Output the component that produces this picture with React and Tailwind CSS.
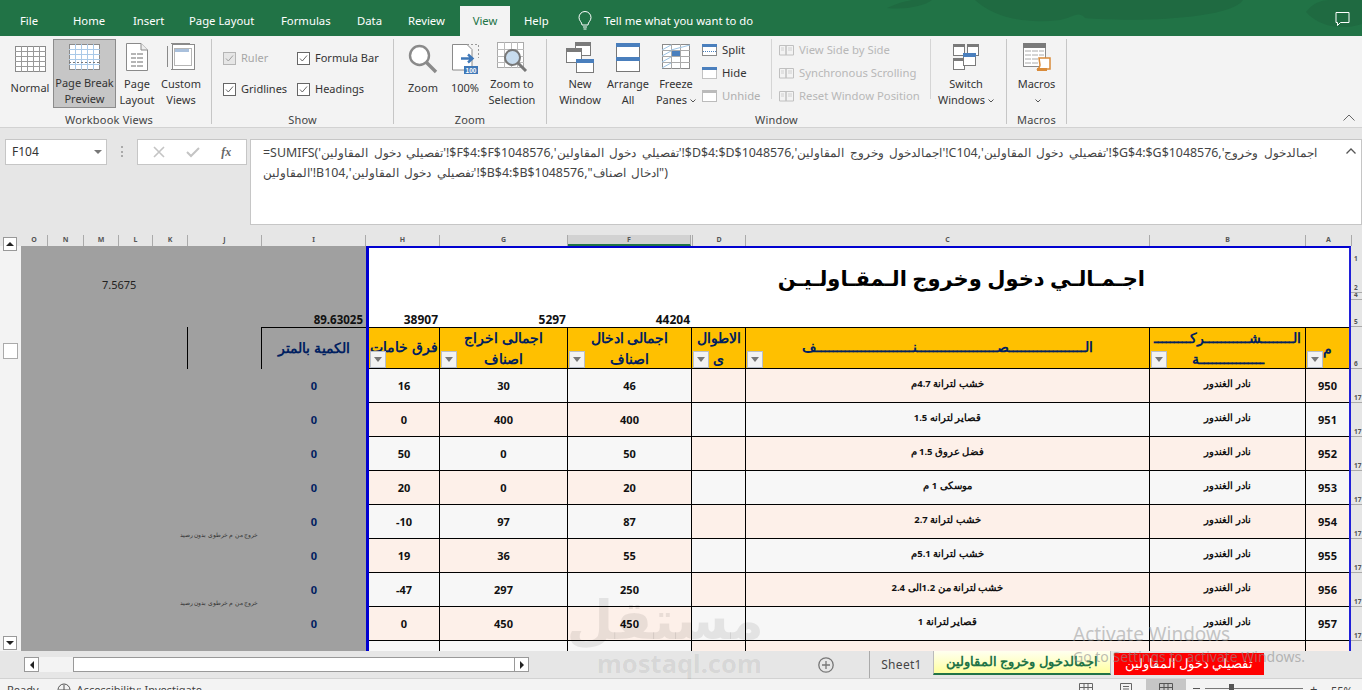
import React from "react";

const AR = '"Liberation Sans","Noto Sans",Arial,sans-serif';
const k = (n) => "ـ".repeat(n);

function Check({ label, disabled }) {
  return (
    <div className={`h-[16px] flex items-center gap-[5px] text-[11px] ${disabled ? "text-[#a6a6a6]" : "text-[#333]"}`}>
      <span className={`w-[13px] h-[13px] border flex items-center justify-center ${disabled ? "border-[#b5b5b5] bg-[#e6e6e6]" : "border-[#666] bg-white"}`}>
        <svg width="9" height="9" viewBox="0 0 9 9"><path d="M1 4.5l2.3 2.5L8 1.5" fill="none" stroke={disabled ? "#a0a0a0" : "#666"} strokeWidth="1" /></svg>
      </span>
      {label}
    </div>
  );
}

function Big({ w, icon, lines, active }) {
  return (
    <div className={`flex flex-col items-center h-[69px] shrink-0 ${active ? "pt-[1px] bg-[#c6c6c6] border border-[#8c8c8c]" : "pt-[2px]"}`} style={{ width: w }}>
      <div className="h-[36px] flex items-center justify-center">{icon}</div>
      <div className="mt-[3px] text-[11px] leading-[16px] text-[#333] text-center whitespace-nowrap">
        {lines.map((l, i) => <div key={i}>{l}</div>)}
      </div>
    </div>
  );
}

const GridIcon = ({ blue }) => (
  <svg width="31" height="26" viewBox="0 0 31 26">
    <rect x=".5" y=".5" width="30" height="25" fill="#fff" stroke="#8a8a8a" />
    {[5, 10, 15, 20].map(y => <path key={y} d={`M0 ${y + .5}H31`} stroke={blue ? "#a9c9e8" : "#9a9a9a"} />)}
    {[6, 12, 18, 24].map(x => <path key={x} d={`M${x + .5} 0V26`} stroke={blue ? "#a9c9e8" : "#9a9a9a"} />)}
    {blue && <path d="M0 18.5H31" stroke="#777" strokeDasharray="2 2" />}
  </svg>
);
const PageIcon = () => (
  <svg width="22" height="28" viewBox="0 0 22 28">
    <path d="M.5.5H15L21.5 7V27.5H.5Z" fill="#fff" stroke="#8a8a8a" />
    <path d="M15 .5V7H21.5" fill="#eee" stroke="#8a8a8a" />
    {[11, 15, 19, 23].map(y => <path key={y} d={`M5 ${y}H17`} stroke="#b5b5b5" strokeWidth="2" />)}
    <path d="M10.5 10V24" stroke="#fff" />
  </svg>
);
const CustomIcon = () => (
  <svg width="28" height="28" viewBox="0 0 28 28">
    <path d="M.5 3V24M4 .5H23M4 26.5H23" stroke="#8a8a8a" fill="none" />
    <rect x="5.5" y="1.5" width="22" height="25" fill="#fff" stroke="#8a8a8a" />
    <rect x="8" y="6" width="14" height="3" fill="#a9c0dc" />
    <rect x="7.5" y="5.5" width="17" height="17" fill="none" stroke="#b5b5b5" />
  </svg>
);
const ZoomIcon = () => (
  <svg width="30" height="30" viewBox="0 0 30 30">
    <circle cx="11.5" cy="11.5" r="9.5" fill="#fff" stroke="#8a8a8a" strokeWidth="2.4" />
    <path d="M18.5 18.5L28 28" stroke="#8a8a8a" strokeWidth="3.4" />
  </svg>
);
const Zoom100 = () => (
  <svg width="27" height="30" viewBox="0 0 27 30">
    <path d="M.5.5H15L20 5.5V26H.5Z" fill="#fff" stroke="#8a8a8a" />
    <path d="M15 .5H26.5V14" stroke="#999" strokeDasharray="2 2" fill="none" />
    <path d="M9 14.5H20M16 10.5L20.5 14.5L16 18.5" stroke="#3f78b8" strokeWidth="2.4" fill="none" />
    <rect x="12" y="22" width="14" height="8" fill="#3f78b8" />
    <text x="19" y="28.5" fontSize="6.5" fill="#fff" fontWeight="700" textAnchor="middle" fontFamily={AR}>100</text>
  </svg>
);
const ZoomSel = () => (
  <svg width="31" height="30" viewBox="0 0 31 30">
    <rect x=".5" y=".5" width="26" height="25" fill="#fff" stroke="#aaa" />
    {[7, 14, 20].map(y => <path key={y} d={`M0 ${y + .5}H27`} stroke="#bbb" />)}
    {[7, 14, 20].map(x => <path key={x} d={`M${x + .5} 0V26`} stroke="#bbb" />)}
    <circle cx="15.5" cy="15.5" r="7.5" fill="#c8dcee" stroke="#777" strokeWidth="2" />
    <path d="M21 21L29 29" stroke="#777" strokeWidth="3" />
  </svg>
);
const NewWin = () => (
  <svg width="28" height="31" viewBox="0 0 28 31">
    <rect x="9.5" y=".5" width="15" height="13" fill="#fff" stroke="#7a7a7a" /><rect x="9" y="0" width="16" height="4" fill="#7a7a7a" />
    <rect x=".5" y="6.5" width="15" height="14" fill="#fff" stroke="#7a7a7a" /><rect x="0" y="6" width="16" height="4" fill="#7a7a7a" />
    <rect x="10.5" y="17.5" width="17" height="13" fill="#fff" stroke="#7a7a7a" /><rect x="10" y="17" width="18" height="4" fill="#4a7fbd" />
  </svg>
);
const Arrange = () => (
  <svg width="24" height="29" viewBox="0 0 24 29">
    <rect x=".5" y=".5" width="23" height="28" fill="#fff" stroke="#777" />
    <rect x="0" y="0" width="24" height="4" fill="#4a7fbd" /><rect x="0" y="14" width="24" height="4" fill="#4a7fbd" />
  </svg>
);
const Freeze = () => (
  <svg width="28" height="26" viewBox="0 0 28 26">
    <rect x=".5" y=".5" width="27" height="24" fill="#fff" stroke="#8a8a8a" />
    {[6, 12, 18].map(y => <path key={y} d={`M0 ${y + .5}H28`} stroke="#aaa" />)}
    {[9, 18].map(x => <path key={x} d={`M${x + .5} 0V25`} stroke="#aaa" />)}
    <path d="M0 6L9 1M0 12L9 7M0 18L9 13M0 24L9 19M9 6L28 1" stroke="#9cc2e2" />
    <rect x="10" y="7" width="8" height="5" fill="#4a7fbd" />
  </svg>
);
const SmallWin = ({ kind }) => (
  <svg width="15" height="12" viewBox="0 0 15 12">
    <rect x=".5" y=".5" width="14" height="11" fill="#fff" stroke={kind === "u" ? "#bbb" : "#8a8a8a"} strokeDasharray={kind === "h" ? "1 1" : undefined} />
    <rect x="0" y="0" width="15" height="3" fill={kind === "u" ? "#bbb" : "#4a7fbd"} />
    {kind === "s" && <path d="M1 7.5H14" stroke="#4a7fbd" strokeDasharray="1 1" />}
  </svg>
);
const DisIcon = () => (
  <svg width="15" height="12" viewBox="0 0 15 12"><path d="M.5 1.5H7V11H.5ZM7 1.5H14.5V11H7Z" fill="none" stroke="#c0c0c0" /><path d="M2 4H5M2 6H5M9 4H13M9 6H13" stroke="#d0d0d0" /></svg>
);
const Switch = () => (
  <svg width="26" height="26" viewBox="0 0 26 26">
    <rect x=".5" y=".5" width="11" height="11" fill="#fff" stroke="#7a7a7a" /><rect x="0" y="0" width="12" height="3" fill="#7a7a7a" />
    <rect x="14.5" y=".5" width="11" height="11" fill="#fff" stroke="#7a7a7a" /><rect x="14" y="0" width="12" height="3" fill="#7a7a7a" />
    <rect x=".5" y="14.5" width="11" height="11" fill="#fff" stroke="#7a7a7a" /><rect x="0" y="14" width="12" height="3" fill="#7a7a7a" />
    <rect x="10.5" y="9.5" width="12" height="12" fill="#fff" stroke="#7a7a7a" /><rect x="10" y="9" width="13" height="4" fill="#4a7fbd" />
  </svg>
);
const Macro = () => (
  <svg width="28" height="29" viewBox="0 0 28 29">
    <rect x=".5" y=".5" width="22" height="23" fill="#fff" stroke="#8a8a8a" /><rect x="0" y="0" width="23" height="5" fill="#7a7a7a" />
    {[8, 12, 16, 20].map(y => <path key={y} d={`M2 ${y}H21`} stroke="#aaa" strokeDasharray="6 1" />)}
    <path d="M16 15H27V26H15C16 25 17 24 17 22Z" fill="#fff" stroke="#d98b3a" strokeWidth="1.5" />
    <path d="M14 25H24V28H14Z" fill="#d98b3a" />
  </svg>
);

function Group({ w, title, children }) {
  return (
    <div className="flex flex-col shrink-0 border-r border-[#c6c6c6] h-[85px] mt-[3px]" style={{ width: w }}>
      <div className="h-[69px] flex shrink-0">{children}</div>
      <div className="text-[11px] leading-[14px] text-[#444] text-center mt-[5px] tracking-[0.2px] shrink-0">{title}</div>
    </div>
  );
}

const Chev = () => (
  <svg className="inline ml-[3px]" width="6" height="4" viewBox="0 0 6 4"><path d="M.5.5L3 3L5.5.5" fill="none" stroke="#555" /></svg>
);

const FILTER = () => (
  <span className="absolute left-[1px] bottom-0 w-[16px] h-[17px] bg-[#f2f2f2] border border-[#b9bfc9] flex items-center justify-center">
    <svg width="8" height="5" viewBox="0 0 8 5"><path d="M0 0H8L4 5Z" fill="#777" /></svg>
  </span>
);

const rows = [
  ["950", "نادر الغندور", "خشب لترانة 4.7م", "46", "30", "16", "0", ""],
  ["951", "نادر الغندور", "قصاير لترانه 1.5", "400", "400", "0", "0", ""],
  ["952", "نادر الغندور", "فضل عروق 1.5 م", "50", "0", "50", "0", ""],
  ["953", "نادر الغندور", "موسكى 1 م", "20", "0", "20", "0", ""],
  ["954", "نادر الغندور", "خشب لترانة 2.7", "87", "97", "-10", "0", "خروج من م خرطوي بدون رصيد"],
  ["955", "نادر الغندور", "خشب لترانة 5.1م", "55", "36", "19", "0", ""],
  ["956", "نادر الغندور", "خشب لترانة من 1.2الى 2.4", "250", "297", "-47", "0", "خروج من م خرطوي بدون رصيد"],
  ["957", "نادر الغندور", "قصاير لترانة 1", "450", "450", "0", "0", ""],
];

const colHeads = [["O", 27], ["N", 36], ["M", 35], ["L", 34], ["K", 35], ["J", 74], ["I", 104], ["H", 74], ["G", 128], ["F", 123], ["", 2], ["D", 53], ["C", 404], ["B", 156], ["A", 46]];

const PINK = "bg-[#fdf0e9]";
const GRAY = "bg-[#f7f7f7]";
const CW = ["w-[71px]", "w-[128px]", "w-[124px]", "w-[54px]", "w-[404px]", "w-[156px]", "w-[43px]"];
const CELL = "h-full flex items-center justify-center border-r border-black font-bold text-[#111] shrink-0";

function Row({ r, idx }) {
  const a = idx % 2 === 0 ? PINK : GRAY;
  const b = idx % 2 === 0 ? GRAY : PINK;
  return (
    <div className="h-[34px] flex border-b border-black shrink-0" dir="ltr">
      <div className={`${CELL} ${CW[0]} ${b} text-[11px] pt-[1px]`}>{r[5]}</div>
      <div className={`${CELL} ${CW[1]} ${b} text-[11px] pt-[1px]`}>{r[4]}</div>
      <div className={`${CELL} ${CW[2]} ${b} text-[11px] pt-[1px]`}>{r[3]}</div>
      <div className={`${CELL} ${CW[3]} ${a}`} />
      <div className={`${CELL} ${CW[4]} ${a} text-[9.5px] pb-[2px]`} dir="rtl">{r[2]}</div>
      <div className={`${CELL} ${CW[5]} ${a} text-[9.5px] pb-[2px]`} dir="rtl">{r[1]}</div>
      <div className={`${CELL} ${CW[6]} ${a} border-r-0 text-[11px] pt-[1px]`}>{r[0]}</div>
    </div>
  );
}

function HeadCell({ w, children, noBorder }) {
  return (
    <div className={`${w} relative h-full bg-[#ffc000] shrink-0 flex items-center justify-center text-center text-[14px] leading-[21px] font-bold text-[#002060] overflow-hidden ${noBorder ? "" : "border-r border-black"}`} dir="rtl">
      {children}
      <FILTER />
    </div>
  );
}

const RH = "shrink-0 border-b border-[#aaa] flex items-end pl-[3px] leading-[9px]";

export default function App() {
  return (
    <div className="w-[1362px] h-[690px] overflow-hidden bg-[#e6e6e6] flex flex-col relative" style={{ fontFamily: '"Noto Sans","Open Sans",Arial,sans-serif' }}>
      {/* Title / tab strip */}
      <div className="h-[36px] bg-[#217346] flex items-end relative shrink-0 overflow-hidden text-[11.3px] text-white">
        <svg className="absolute left-[760px] top-0" width="602" height="36" viewBox="0 0 602 36">
          <path d="M127 8C140 2 150 0 155 0H172C165 6 145 10 127 8ZM215 0C235 18 265 24 300 20C312 18 318 10 325 18C370 22 470 20 483 0ZM546 12C552 4 560 0 570 0H602V24C585 30 560 28 546 12Z" fill="#1f6a41" />
        </svg>
        <div className="flex items-center h-[30px] relative w-full">
          <span className="ml-[20px] w-[53px]">File</span>
          <span className="w-[60px]">Home</span>
          <span className="w-[56px]">Insert</span>
          <span className="w-[92px]">Page Layout</span>
          <span className="w-[76px]">Formulas</span>
          <span className="w-[51px]">Data</span>
          <span className="w-[52px]">Review</span>
          <span className="w-[50px] h-[30px] bg-[#f3f3f3] text-[#217346] flex items-center justify-center">View</span>
          <span className="ml-[14px] w-[40px]">Help</span>
          <svg className="ml-[13px]" width="16" height="20" viewBox="0 0 16 20"><path d="M5 14C5 11 2 10 2 6.500A6 6 0 0 1 14 6.500C14 10 11 11 11 14ZM6 16H10M6.500 18H9.500" fill="none" stroke="#fff" /></svg>
          <span className="ml-[11px]">Tell me what you want to do</span>
          <svg className="absolute left-[1335px] top-[6px]" width="15" height="15" viewBox="0 0 15 15"><path d="M1 .5H14V10.500H5.500L2.500 13.500V10.500H1Z" fill="none" stroke="#fff" /></svg>
        </div>
      </div>

      {/* Ribbon */}
      <div className="h-[92px] bg-[#f3f3f3] border-b border-[#d2d2d2] flex pl-[7px] shrink-0 relative">
        <Group w={205} title="Workbook Views">
          <Big w={46} icon={<GridIcon />} lines={["Normal"]} />
          <Big w={63} icon={<GridIcon blue />} lines={["Page Break", "Preview"]} active />
          <Big w={42} icon={<PageIcon />} lines={["Page", "Layout"]} />
          <Big w={46} icon={<CustomIcon />} lines={["Custom", "Views"]} />
        </Group>
        <Group w={182} title="Show">
          <div className="grid grid-cols-[74px_auto] gap-y-[15px] pl-[11px] pt-[11px] content-start">
            <Check label="Ruler" disabled />
            <Check label="Formula Bar" />
            <Check label="Gridlines" />
            <Check label="Headings" />
          </div>
        </Group>
        <Group w={153} title="Zoom">
          <Big w={58} icon={<ZoomIcon />} lines={["Zoom"]} />
          <Big w={26} icon={<Zoom100 />} lines={["100%"]} />
          <Big w={68} icon={<ZoomSel />} lines={["Zoom to", "Selection"]} />
        </Group>
        <Group w={460} title="Window">
          <div className="w-[9px] shrink-0" />
          <Big w={48} icon={<NewWin />} lines={["New", "Window"]} />
          <Big w={48} icon={<Arrange />} lines={["Arrange", "All"]} />
          <Big w={48} icon={<Freeze />} lines={["Freeze", <span key="a">Panes<Chev /></span>]} />
          <div className="w-[71px] shrink-0 flex flex-col gap-[7px] text-[11.3px] text-[#333] pt-[3px] pl-[2px]">
            <div className="flex items-center gap-[5px] h-[16px]"><SmallWin kind="s" />Split</div>
            <div className="flex items-center gap-[5px] h-[16px]"><SmallWin kind="h" />Hide</div>
            <div className="flex items-center gap-[5px] h-[16px] text-[#b0b0b0]"><SmallWin kind="u" />Unhide</div>
          </div>
          <div className="w-[160px] shrink-0 flex flex-col gap-[7px] text-[11.3px] text-[#b8b8b8] pt-[3px] pl-[7px] h-[60px] border-x border-[#d5d5d5] whitespace-nowrap">
            <div className="flex items-center gap-[5px] h-[16px]"><DisIcon />View Side by Side</div>
            <div className="flex items-center gap-[5px] h-[16px]"><DisIcon />Synchronous Scrolling</div>
            <div className="flex items-center gap-[5px] h-[16px]"><DisIcon />Reset Window Position</div>
          </div>
          <Big w={70} icon={<Switch />} lines={["Switch", <span key="a">Windows<Chev /></span>]} />
        </Group>
        <Group w={60} title="Macros">
          <Big w={59} icon={<Macro />} lines={["Macros", <Chev key="c" />]} />
        </Group>
        <svg className="absolute right-[7px] bottom-[6px]" width="12" height="7" viewBox="0 0 12 7"><path d="M.5 6.500L6 1L11.500 6.500" fill="none" stroke="#666" /></svg>
      </div>

      {/* Formula bar */}
      <div className="h-[107px] flex pt-[11px] shrink-0 bg-[#e6e6e6]">
        <div className="ml-[5px] w-[102px] h-[26px] bg-white border border-[#c6c6c6] flex items-center justify-between pl-[6px] pr-[4px] text-[12px] text-[#333]">
          F104
          <svg width="8" height="4" viewBox="0 0 8 4"><path d="M0 0H8L4 4Z" fill="#777" /></svg>
        </div>
        <div className="w-[30px] flex justify-center pt-[7px]"><span className="w-[2px] h-[11px] border-l-2 border-dotted border-[#aaa]" /></div>
        <div className="w-[110px] h-[26px] bg-white border border-[#c6c6c6] flex items-center justify-around px-[4px]">
          <svg width="12" height="12" viewBox="0 0 12 12"><path d="M1 1L11 11M11 1L1 11" stroke="#c4c4c4" strokeWidth="1.600" /></svg>
          <svg width="14" height="12" viewBox="0 0 14 12"><path d="M1 6L5 10L13 2" fill="none" stroke="#c4c4c4" strokeWidth="2" /></svg>
          <span className="text-[12px] italic font-bold text-[#666]" style={{ fontFamily: '"Liberation Serif",serif' }}>fx</span>
        </div>
        <div className="ml-[3px] w-[1112px] h-[86px] bg-white border border-[#c6c6c6] pl-[12px] pt-[3px] text-[12.4px] [word-spacing:2.3px] leading-[20px] text-[#444] relative" dir="ltr">
          <div className="whitespace-nowrap" dir="ltr">
            {"=SUMIFS('تفصيلي دخول المقاولين'!$F$4:$F$1048576,'تفصيلي دخول المقاولين'!$D$4:$D$1048576,'اجمالدخول وخروج المقاولين'!C104,'تفصيلي دخول المقاولين'!$G$4:$G$1048576,'اجمالدخول وخروج"}
          </div>
          <div className="whitespace-nowrap" dir="ltr">
            {"المقاولين'!B104,'تفصيلي دخول المقاولين'!$B$4:$B$1048576,\"ادخال اصناف\")"}
          </div>
          <svg className="absolute right-[5px] top-[8px]" width="10" height="6" viewBox="0 0 10 6"><path d="M.5 5.500L5 1L9.500 5.500" fill="none" stroke="#555" strokeWidth="1.300" /></svg>
        </div>
      </div>

      {/* Sheet area */}
      <div className="h-[416px] flex shrink-0 relative overflow-hidden">
        <div className="w-[21px] shrink-0 flex flex-col justify-between pt-[2px] pb-[1px] bg-[#f3f3f3] relative">
          <div className="h-[11px] bg-[#e6e6e6] absolute top-0 left-0 right-0" />
          <div className="ml-[3px] w-[14px] h-[14px] bg-white border border-[#999] flex items-center justify-center relative">
            <svg width="8" height="4" viewBox="0 0 8 4"><path d="M0 4H8L4 0Z" fill="#222" /></svg>
          </div>
          <div className="absolute left-[3px] top-[108px] w-[15px] h-[16px] bg-white border border-[#aaa]" />
          <div className="ml-[3px] w-[14px] h-[14px] bg-white border border-[#999] flex items-center justify-center">
            <svg width="8" height="4" viewBox="0 0 8 4"><path d="M0 0H8L4 4Z" fill="#222" /></svg>
          </div>
        </div>
        <div className="flex-1 flex flex-col min-w-0">
          {/* column headers */}
          <div className="h-[11px] flex bg-[#e6e6e6] shrink-0 text-[7px] leading-[10px] text-[#555] font-bold">
            {colHeads.map(([n, w], i) => (
              <div key={i} className={`text-center shrink-0 border-r border-[#aaa] ${n === "F" ? "bg-[#d2d2d2] border-b-2 border-b-[#217346]" : ""}`} style={{ width: w }}>{n}</div>
            ))}
          </div>
          <div className="flex flex-1 min-h-0">
            {/* gray area */}
            <div className="w-[345px] shrink-0 bg-[#a0a0a0] flex flex-col relative">
              <div className="h-[71px] shrink-0 relative">
                <span className="absolute left-[81px] top-[31px] text-[11px] text-[#222]">7.5675</span>
              </div>
              <div className="h-[10px] shrink-0 flex items-end justify-end pr-[3px] text-[11.5px] leading-[10px] font-bold text-[#111] relative -top-[2px]">89.63025</div>
              <div className="h-[42px] shrink-0 flex">
                <div className="w-[167px] border-r border-black" />
                <div className="w-[74px] border-r border-black" />
                <div className="flex-1 border-t border-black flex items-center justify-center text-[14px] font-bold text-[#002060] pb-[3px]" dir="rtl">الكمية بالمتر</div>
              </div>
              {rows.map((r, i) => (
                <div key={i} className="h-[34px] shrink-0 flex">
                  <div className="w-[241px] shrink-0 flex items-end justify-center text-[6px] leading-[8px] text-[#333] pl-[155px] whitespace-nowrap" dir="ltr"><span dir="rtl">{r[7]}</span></div>
                  <div className="flex-1 flex items-center justify-center text-[11px] font-bold text-[#002060]">{r[6]}</div>
                </div>
              ))}
            </div>
            {/* print area */}
            <div className="flex-1 min-w-0 flex border-l-[3px] border-[#0000d0] border-t-2 border-t-[#0000d0] border-r-2 border-r-[#2020d8] bg-white overflow-hidden flex-col">
              <div className="h-[79px] shrink-0 relative flex flex-col">
                <div className="h-[69px] flex items-center justify-end pr-[204px] text-[21px] font-bold text-black pb-[8px]" dir="ltr">
                  <span dir="rtl" style={{ fontFamily: '"Noto Sans","DejaVu Sans",sans-serif' }}>اجـمـالـي دخول وخروج الـمقـاولـيـن</span>
                </div>
                <div className="h-[10px] flex text-[12px] leading-[10px] font-bold text-[#111] absolute bottom-[2px] left-0">
                  <div className="w-[71px] text-right pr-[2px]">38907</div>
                  <div className="w-[128px] text-right pr-[2px]">5297</div>
                  <div className="w-[124px] text-right pr-[2px]">44204</div>
                </div>
              </div>
              <div className="h-[42px] flex border-y border-black shrink-0">
                <HeadCell w="w-[71px]"><span className="block whitespace-nowrap pb-[4px]">فرق خامات</span></HeadCell>
                <HeadCell w="w-[128px]"><span>اجمالى اخراج<br />اصناف</span></HeadCell>
                <HeadCell w="w-[124px]"><span>اجمالى ادخال<br />اصناف</span></HeadCell>
                <HeadCell w="w-[54px]"><span>الاطوال<br />ى</span></HeadCell>
                <HeadCell w="w-[404px]"><span className="whitespace-nowrap pb-[4px]">{`ال${k(19)}ص${k(20)}ن${k(24)}ف`}</span></HeadCell>
                <HeadCell w="w-[156px]"><span className="whitespace-nowrap">{`ال${k(8)}ش${k(11)}رك${k(9)}`}<br />{`${k(16)}ة`}</span></HeadCell>
                <HeadCell w="w-[43px]" noBorder><span>م</span></HeadCell>
              </div>
              {rows.map((r, i) => <Row key={i} r={r} idx={i} />)}
              <div className="h-[10px] flex shrink-0" dir="ltr">
                <div className={`${CELL} ${CW[0]} ${GRAY}`} />
                <div className={`${CELL} ${CW[1]} ${GRAY}`} />
                <div className={`${CELL} ${CW[2]} ${GRAY}`} />
                <div className={`${CELL} ${CW[3]} ${PINK}`} />
                <div className={`${CELL} ${CW[4]} ${PINK}`} />
                <div className={`${CELL} ${CW[5]} ${PINK}`} />
                <div className={`${CELL} ${CW[6]} ${PINK} border-r-0`} />
              </div>
            </div>
            {/* row headers */}
            <div className="w-[11px] shrink-0 bg-[#e6e6e6] flex flex-col text-[6.5px] font-bold text-[#555] overflow-hidden">
              <div className={`${RH} h-[47px] relative`}>2<span className="absolute left-[3px] top-[8px]">1</span></div>
              <div className={`${RH} h-[7px]`}>4</div>
              <div className={`${RH} h-[27px]`}>5</div>
              <div className={`${RH} h-[42px]`}>6</div>
              {rows.map((r, i) => <div key={i} className={`${RH} h-[34px]`}>17</div>)}
            </div>
          </div>
        </div>
      </div>

      {/* Tabs row */}
      <div className="h-[27px] flex items-center shrink-0 relative bg-[#e6e6e6]">
        <div className="ml-[24px] w-[15px] h-[15px] bg-white border border-[#999] flex items-center justify-center">
          <svg width="4" height="8" viewBox="0 0 4 8"><path d="M4 0V8L0 4Z" fill="#222" /></svg>
        </div>
        <div className="w-[34px] h-[15px] bg-[#f3f3f3]" />
        <div className="w-[442px] h-[15px] bg-white border border-[#999]" />
        <div className="w-[14px] h-[15px] bg-white border border-[#999] border-l-0 flex items-center justify-center">
          <svg width="4" height="8" viewBox="0 0 4 8"><path d="M0 0V8L4 4Z" fill="#222" /></svg>
        </div>
        <div className="w-[289px]" />
        <svg width="16" height="16" viewBox="0 0 16 16"><circle cx="8" cy="8" r="7.200" fill="none" stroke="#777" strokeWidth="1.300" /><path d="M8 4V12M4 8H12" stroke="#777" strokeWidth="1.300" /></svg>
        <div className="ml-[35px] h-[27px] bg-[#aaa] w-[1px]" />
        <div className="w-[63px] text-center text-[12px] text-[#444] tracking-[0.3px]">Sheet1</div>
        <div className="w-[178px] h-[24px] self-start bg-gradient-to-b from-[#fffff0] to-[#ffff9c] border-b-2 border-[#217346] border-x border-x-[#bbb] text-center text-[13px] leading-[21px] font-bold text-[#217346]" dir="rtl">اجمالدخول وخروج المقاولين</div>
        <div className="w-[150px] h-[22px] ml-[3px] self-start mt-[2px] bg-[#ff0000] text-center text-[13px] leading-[21px] text-white" dir="rtl">تفصيلي دخول المقاولين</div>
      </div>

      {/* Status bar */}
      <div className="flex-1 bg-[#f3f3f3] border-t border-[#d2d2d2] flex items-start text-[11px] leading-[14px] text-[#444] relative pt-[4px]">
        <span className="ml-[7px]">Ready</span>
        <svg className="ml-[18px]" width="14" height="14" viewBox="0 0 14 14"><circle cx="7" cy="7" r="6" fill="none" stroke="#555" /><path d="M2 7H12M7 2V12" stroke="#555" /></svg>
        <span className="ml-[6px]">Accessibility: Investigate</span>
        <svg className="absolute left-[1079px] top-[4px]" width="14" height="12" viewBox="0 0 14 12"><path d="M.5.500H13.500V12H.5ZM.5 4.500H13.500M.5 8.500H13.500M5 .5V12M9 .5V12" fill="none" stroke="#666" /></svg>
        <svg className="absolute left-[1119px] top-[4px]" width="14" height="12" viewBox="0 0 14 12"><path d="M1.500.500H12.500V12H1.500ZM4 3.500H10M4 6H10M4 8.500H10" fill="none" stroke="#666" /></svg>
        <div className="absolute left-[1146px] top-0 w-[40px] h-[12px] bg-[#c6c6c6] flex justify-center pt-[4px] overflow-hidden">
          <svg width="14" height="12" viewBox="0 0 14 12"><path d="M.5.500H13.500V12H.5ZM.5 4.500H13.500M5 .5V12M9 .5V12" fill="none" stroke="#555" /></svg>
        </div>
        <div className="absolute left-[1193px] top-[9px] w-[7px] h-[1px] bg-[#555]" />
        <div className="absolute left-[1205px] top-[9px] w-[98px] h-[1px] bg-[#777]" />
        <div className="absolute left-[1229px] top-[5px] w-[5px] h-[8px] bg-[#555]" />
        <span className="absolute left-[1310px] top-[3px] text-[13px]">+</span>
        <span className="absolute left-[1331px] top-[5px]">55%</span>
      </div>

      {/* overlays: watermark */}
      <div className="absolute left-[598px] top-[585px] w-[166px] text-center pointer-events-none text-black/[0.08] text-[54px] font-bold leading-[72px] whitespace-nowrap" dir="rtl" style={{ fontFamily: '"DejaVu Sans",sans-serif' }}>مستقل</div>
      <div className="absolute left-[597px] top-[649px] pointer-events-none text-black/[0.08] text-[25.500px] font-bold leading-[28px]">mostaql.com</div>
      <div className="absolute left-[1073px] top-[623px] text-[#8f8f8f]/50 pointer-events-none text-[19px] leading-[22px]">Activate Windows</div>
      <div className="absolute left-[1073px] top-[649px] text-[#8f8f8f]/60 pointer-events-none text-[14px] leading-[16px]">Go to Settings to activate Windows.</div>
    </div>
  );
}
